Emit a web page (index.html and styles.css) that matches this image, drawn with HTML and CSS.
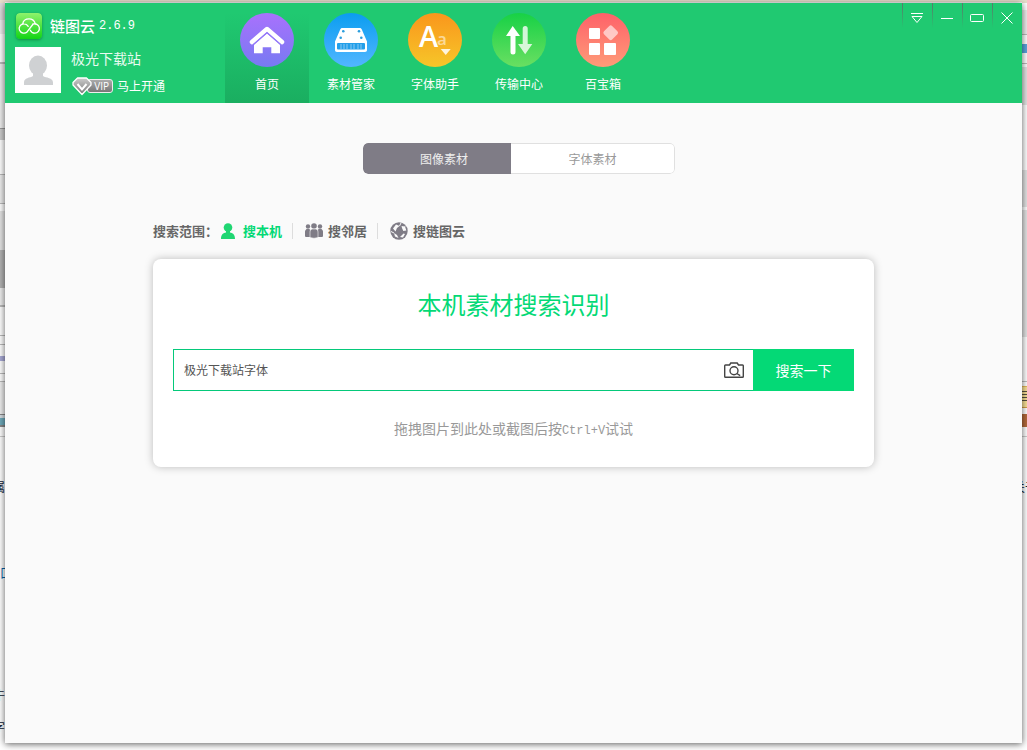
FILE: index.html
```html
<!DOCTYPE html>
<html lang="zh-CN">
<head>
<meta charset="utf-8">
<title>链图云</title>
<meta name="viewport" content="width=device-width, initial-scale=1">
<link rel="stylesheet" href="styles.css">
</head>
<body>
<div class="desktop" aria-hidden="true">
  <div class="strip strip-left">
    <span class="frag f1">属</span><span class="frag f2">口</span><span class="frag f3">牛</span><span class="frag f4">字</span>
  </div>
  <div class="strip strip-right"><span class="frag f5">关于</span></div>
</div>
<div class="window">
  <header class="header">
    <div class="brand">
      <div class="brand-title">
        <svg class="logo" viewBox="0 0 26 26" aria-hidden="true">
          <defs><linearGradient id="gl" x1="0" y1="0" x2="0" y2="1"><stop offset="0" stop-color="#8ef36c"/><stop offset="1" stop-color="#12d414"/></linearGradient></defs>
          <rect width="26" height="26" rx="4" fill="url(#gl)"/>
          <g fill="none" stroke="#fff" stroke-width="1.3" stroke-linecap="round">
            <path d="M16.800 11.500 11.300 18.700A4.700 4.700 0 1 1 8 10.800c2 0 3.300 1 4.200 2.600"/>
            <path d="M14.300 17.200c1 2 2.600 3 4.500 3a4.700 4.700 0 1 0-2-9"/>
            <path d="M6.700 10.800c.5-3 3-5 6.300-5 3 0 5.500 2 6.300 5"/>
          </g>
        </svg>
        <h1 class="app-name">链图云</h1><span class="version">2.6.9</span>
      </div>
      <div class="user">
        <svg class="avatar" viewBox="0 0 46 46" role="img" aria-label="头像"><rect width="46" height="46" fill="#fff"/><ellipse cx="23" cy="18.500" rx="9" ry="10" fill="#cfd1d3"/><path d="M18 26h10v3c3 2 10 1.500 10 6.500V38H9v-2.500c0-5 6-4.500 9-6.500z" fill="#cfd1d3"/></svg>
        <div class="user-info">
          <span class="user-name">极光下载站</span>
          <a class="vip" href="#">
            <span class="vip-badge">
              <svg class="vip-gem" viewBox="0 0 20 19" aria-hidden="true"><defs><linearGradient id="gg" x1="0" y1="0" x2="0" y2="1"><stop offset="0" stop-color="#ccc"/><stop offset="1" stop-color="#777"/></linearGradient></defs><path d="M5.500 1h9L19 5.500V8l-9 9.500L1 8V5.500z" fill="url(#gg)" stroke="#fff" stroke-width="1.300" stroke-linejoin="round"/><path d="m5.500 7 4.500 5.500L14.500 7" fill="none" stroke="#fff" stroke-width="2"/></svg>
              <span class="vip-text">VIP</span>
            </span>
            <span>马上开通</span>
          </a>
        </div>
      </div>
    </div>
    <nav class="nav">
      <button class="tab active" type="button">
        <svg class="tab-icon" viewBox="0 0 54 54" aria-hidden="true"><defs><linearGradient id="g1" x1="0" y1="0" x2="0" y2="1"><stop offset="0" stop-color="#a971fd"/><stop offset="1" stop-color="#777af2"/></linearGradient></defs><circle cx="27" cy="27" r="27" fill="url(#g1)"/><path d="M12 29 27 16l15 13" fill="none" stroke="#fff" stroke-width="4.500" stroke-linecap="round" stroke-linejoin="round"/><path d="M14 31.500 27 20.500l13 11v8.800h-8.700v-6h-8.600v6H14z" fill="#fff"/><path d="m13.500 31.500 13.500-12 13.500 12" fill="none" stroke="#9479f9" stroke-width="1.300"/></svg>
        <span>首页</span>
      </button>
      <button class="tab" type="button">
        <svg class="tab-icon" viewBox="0 0 54 54" aria-hidden="true"><defs><linearGradient id="g2" x1="0" y1="0" x2="0" y2="1"><stop offset="0" stop-color="#0b9df0"/><stop offset="1" stop-color="#52b6ff"/></linearGradient></defs><circle cx="27" cy="27" r="27" fill="url(#g2)"/><path d="M18.500 15h17c1.300 0 2 .5 2.300 1.600L43 28.500V37c0 1.300-.7 2-2 2H13c-1.300 0-2-.7-2-2v-8.500l5.200-11.900c.3-1.100 1-1.600 2.300-1.600z" fill="#fff"/><rect x="13" y="30" width="28" height="6.500" rx="1" fill="#239fe9"/><path d="M17 31v5m3-5v5m3-5v5m4-5v5m3-5v5m4-5v5m3-5v5" stroke="#8bcaf2" stroke-width="1"/><g fill="#2a9ddd"><circle cx="19.300" cy="18.300" r="1.300"/><circle cx="35" cy="18.300" r="1.300"/><circle cx="16.700" cy="24.700" r="1.300"/><circle cx="37.300" cy="24.700" r="1.300"/></g></svg>
        <span>素材管家</span>
      </button>
      <button class="tab" type="button">
        <svg class="tab-icon" viewBox="0 0 54 54" aria-hidden="true"><defs><linearGradient id="g3" x1="0" y1="0" x2="0" y2="1"><stop offset="0" stop-color="#fa961c"/><stop offset="1" stop-color="#f6c629"/></linearGradient></defs><circle cx="27" cy="27" r="27" fill="url(#g3)"/><text class="glyph-a" x="11" y="34" fill="#fff">A</text><text class="glyph-b" x="29" y="32" fill="#fff" fill-opacity=".55">a</text><path d="M32.700 36h10l-5 6z" fill="#fff" fill-opacity=".85"/></svg>
        <span>字体助手</span>
      </button>
      <button class="tab" type="button">
        <svg class="tab-icon" viewBox="0 0 54 54" aria-hidden="true"><defs><linearGradient id="g4" x1="0" y1="0" x2="0" y2="1"><stop offset="0" stop-color="#17d146"/><stop offset="1" stop-color="#69df62"/></linearGradient></defs><circle cx="27" cy="27" r="27" fill="url(#g4)"/><path d="m20.700 13 7.300 10h-4.500v16a2.500 2.500 0 0 1-5 0V23H14z" fill="#fff"/><path d="M33.200 41.300 26 31h4.700V15.500a2.500 2.500 0 0 1 5 0V31h4.600z" fill="#fff" fill-opacity=".78"/></svg>
        <span>传输中心</span>
      </button>
      <button class="tab" type="button">
        <svg class="tab-icon" viewBox="0 0 54 54" aria-hidden="true"><defs><linearGradient id="g5" x1="0" y1="0" x2="0" y2="1"><stop offset="0" stop-color="#fe6169"/><stop offset="1" stop-color="#fe9b78"/></linearGradient></defs><circle cx="27" cy="27" r="27" fill="url(#g5)"/><g fill="#fff"><rect x="13" y="15" width="11" height="11" rx="1"/><rect x="13" y="30" width="11" height="12" rx="1"/><rect x="28" y="30" width="12" height="12" rx="1"/><rect x="29" y="14" width="11.500" height="11.500" rx="2" fill-opacity=".6" transform="rotate(45 34.700 19.700)"/></g></svg>
        <span>百宝箱</span>
      </button>
    </nav>
    <div class="controls">
      <button class="control" type="button" aria-label="菜单"><svg viewBox="0 0 14 12"><path d="M1 1.500h12M2 4.500h10L7 10.500z"/></svg></button>
      <button class="control" type="button" aria-label="最小化"><svg viewBox="0 0 14 12"><path d="M1 6.500h12"/></svg></button>
      <button class="control" type="button" aria-label="最大化"><svg viewBox="0 0 14 12"><rect x=".5" y="2.500" width="13" height="7" rx="1"/></svg></button>
      <button class="control" type="button" aria-label="关闭"><svg viewBox="0 0 14 12"><path d="m1.500.5 11 11m0-11-11 11"/></svg></button>
    </div>
  </header>
  <main class="main">
    <div class="switch">
      <button class="switch-item selected" type="button">图像素材</button>
      <button class="switch-item" type="button">字体素材</button>
    </div>
    <section class="search">
      <div class="scope">
        <span class="scope-label">搜索范围：</span>
        <button class="scope-item current" type="button">
          <svg class="i-person" viewBox="0 0 14 16" aria-hidden="true"><circle cx="7" cy="4.500" r="4.300"/><path d="M5 8h4v1.500c2.500.5 5 1.500 5 6.500H0c0-5 2.500-6 5-6.500z"/></svg>搜本机</button>
        <button class="scope-item" type="button">
          <svg class="i-group" viewBox="0 0 18 16" aria-hidden="true"><circle cx="3" cy="3.500" r="2.200"/><circle cx="15" cy="3.500" r="2.200"/><path d="M1.500 6h3l.5 1v7H1q-1 0-1-1V8.500Q0 7 1.500 6zM13.500 6h3Q18 7 18 8.500V13q0 1-1 1h-4V7z"/><circle cx="9" cy="3" r="2.800"/><path d="M7 6h4c1.500.5 2 1.500 2 3v5.500q-4 1.500-8 0V9c0-1.500.5-2.500 2-3z" stroke="#fafafa" stroke-width=".6"/></svg>搜邻居</button>
        <button class="scope-item" type="button">
          <svg class="i-globe" viewBox="0 0 18 18" aria-hidden="true"><circle cx="9" cy="9" r="8.700"/><path d="M6 2.500 9.500 4 7 6 5.500 9.500 3 6.500zM11.500 4 15 4.500l1.300 4-3 .5-1.300-3zM4 11l3 2 1.500 3-3.500-1.500zM13.500 11.500l1.500.5-2 3.500-3-.5z" fill="#fafafa"/><path d="M1 9.500 4 11M9.500 4l1.500-3M15 4.500l1-1" fill="none" stroke="#fafafa"/></svg>搜链图云</button>
      </div>
      <form class="card">
        <h2 class="card-title">本机素材搜索识别</h2>
        <div class="search-row">
          <input class="search-input" type="text" aria-label="搜索素材" value="极光下载站字体">
          <button class="camera" type="button" aria-label="以图搜索"><svg viewBox="0 0 20 16"><path d="M1.500 3h4l1.300-2h6.400l1.300 2h4q.8 0 .8.800v10.700q0 .8-.8.800h-17q-.8 0-.8-.8V3.800q0-.8.800-.8z"/><circle cx="10" cy="8.700" r="4"/><path d="m12.800 11.500 3.400 2.200"/></svg></button>
          <button class="submit" type="submit">搜索一下</button>
        </div>
        <p class="hint">拖拽图片到此处或截图后按<span class="keys">Ctrl+V</span>试试</p>
      </form>
    </section>
  </main>
</div>
</body>
</html>
```
FILE: styles.css
```css
* { box-sizing: border-box; }

body {
  margin: 0;
  min-height: 100vh;
  display: flex;
  padding: 3px 5px 7px;
  background: #fff;
  font: 12px/16px "Noto Sans CJK SC", sans-serif;
  color: #555;
}

button, input { font: inherit; color: inherit; border: 0; margin: 0; padding: 0; background: none; }
button { cursor: pointer; }
svg { display: block; flex: none; }
h1, h2, p { margin: 0; font-weight: normal; }

/* Slivers of the desktop showing around the window */
.desktop { position: absolute; inset: 0; overflow: hidden; background: linear-gradient(#e9e0cd 2px, #fff 2px); }
.strip { position: absolute; top: 0; bottom: 0; width: 5px; overflow: hidden; }
.strip-left {
  left: 0;
  background: linear-gradient(#e9e0cd 3px, #ddd 3px 20px, #eee 20px 34px, #fff 34px 62px, #bbb 62px 64px, #eee 64px 128px, #999 128px 129px, #ccc 129px 140px, #fff 140px 174px, #bbb 174px 175px, #eee 175px 203px, #bbb 203px 204px, #fff 204px 211px, #e4e4e4 211px 250px, #b3b3b3 250px 288px, #eee 288px 305px, #bbb 305px 307px, #fff 307px 335px, #bbb 335px 336px, #fff 336px 344px, #bbb 344px 345px, #fff 345px 356px, #a9aad6 356px 361px, #fff 361px 373px, #bbb 373px 374px, #fff 374px 381px, #bbb 381px 382px, #eee 382px 414px, #888 414px 415px, #d5dde2 415px 418px, #6faabb 418px 425px, #888 425px 427px, #fff 427px 436px, #ccc 436px 437px, #fff 437px);
}
.strip-right {
  right: 0;
  background: linear-gradient(#e9e0cd 3px, #fff 3px 10px, #eee 10px 34px, #bbb 34px 35px, #fff 35px 44px, #5aa4dd 44px 53px, #fff 53px 63px, #bbb 63px 64px, #fff 64px 67px, #e4e4e4 67px 105px, #fff 105px 170px, #e4e4e4 170px 207px, #fff 207px 210px, #e4e4e4 210px 337px, #fff 337px 381px, #bbb 381px 382px, #fff 382px 386px, #e6b95b 386px 387px, #fae096 387px 391px, #55503f 391px 392px, #fae096 392px 394px, #55503f 394px 395px, #fae096 395px 397px, #55503f 397px 398px, #fae096 398px 400px, #55503f 400px 401px, #fae096 401px 407px, #d39c46 407px 408px, #fff 408px 414px, #b56a3b 414px 427px, #fff 427px 436px, #ccc 436px 437px, #fff 437px);
}
.frag { position: absolute; left: -7px; color: #123; white-space: nowrap; }
.f1 { top: 479px; }
.f2 { top: 565px; left: 0; color: #0763a8; }
.f3 { top: 687px; }
.f4 { top: 719px; }
.f5 { top: 479px; left: -9px; }

.window {
  position: relative;
  flex: 1;
  min-width: 0;
  display: flex;
  flex-direction: column;
  background: #fafafa;
  box-shadow: 0 1px 7px rgba(0, 0, 0, .65);
}

.header { display: flex; height: 100px; background: #20c971; color: #fff; }
.brand { width: 220px; padding: 10px 0 0 10px; flex: none; }
.brand-title { display: flex; align-items: center; height: 26px; padding-left: 1px; }
.logo { width: 26px; height: 26px; border-radius: 4px; box-shadow: 0 1px 3px rgba(0, 80, 20, .5); }
.app-name { margin-left: 8px; font-size: 15px; font-weight: 500; }
.version { margin-left: 4px; font: 12px/16px "Liberation Mono", monospace; }
.user { display: flex; gap: 10px; margin-top: 8px; }
.avatar { width: 46px; height: 46px; }
.user-info { display: flex; flex-direction: column; gap: 10px; padding-top: 3px; }
.user-name { font-size: 14px; line-height: 16px; color: #eafbf1; }
.vip { display: flex; align-items: center; gap: 4px; height: 20px; color: #fff; text-decoration: none; }
.vip-badge { display: flex; align-items: center; padding-left: 1px; }
.vip-gem { position: relative; width: 20px; height: 19px; }
.vip-text {
  margin-left: -5px;
  width: 26px;
  height: 14px;
  border: 1px solid #eee;
  border-radius: 3px;
  background: linear-gradient(#aaa, #777);
  font: 10px/12px "Open Sans", sans-serif;
  text-align: right;
  padding-right: 3px;
}

.nav { display: flex; flex: none; }
.tab { width: 84px; display: flex; flex-direction: column; align-items: center; gap: 9px; padding-top: 10px; }
.tab.active { background: linear-gradient(rgba(26, 174, 96, 0) 10px, #1aae60); }
.tab-icon { width: 54px; height: 54px; }
.glyph-a { font: 600 29px "Open Sans", sans-serif; }
.glyph-b { font: 600 17px "Open Sans", sans-serif; }

.controls { display: flex; margin-left: auto; height: 25px; }
.control {
  width: 30px;
  display: flex;
  align-items: center;
  justify-content: center;
  padding-top: 4px;
  background: linear-gradient(#5d7668, rgba(93, 118, 104, 0)) left / 1px 100% no-repeat;
}
.control svg { width: 14px; height: 12px; fill: none; stroke: #fff; stroke-width: 1; }

.main { display: flex; flex-direction: column; align-items: center; padding: 40px 20px; }
.switch { display: flex; height: 31px; margin-left: 11px; border-radius: 5px; background: #fff; overflow: hidden; }
.switch-item { width: 164px; border: 1px solid #e0e0e0; border-left: 0; border-radius: 0 5px 5px 0; color: #999; }
.switch-item.selected { width: 148px; padding-left: 14px; border: 0; border-radius: 5px 0 0 5px; background: #7f7c86; color: #eee; }

.search { width: 100%; max-width: 721px; margin-top: 48px; }
.scope { display: flex; align-items: center; height: 18px; font-size: 13px; font-weight: 700; color: #666; }
.scope-label { width: 68px; white-space: nowrap; }
.scope-item { display: flex; align-items: center; gap: 5px; height: 16px; font-weight: 700; fill: #7f7c86; }
.scope-item + .scope-item { margin-left: 10px; padding-left: 12px; border-left: 1px solid #ddd; }
.scope-item.current { color: #04d976; fill: #20d672; gap: 8px; }
.i-person { width: 14px; height: 16px; }
.i-group { width: 18px; height: 16px; }
.i-globe { width: 18px; height: 18px; }

.card {
  margin-top: 19px;
  padding: 29px 20px 28px;
  border-radius: 8px;
  background: #fff;
  box-shadow: 0 0 8px rgba(0, 0, 0, .25);
  text-align: center;
}
.card-title { font-size: 24px; line-height: 32px; color: #04d976; }
.search-row { display: flex; height: 42px; margin-top: 29px; border: 1px solid #04c97a; }
.search-input { flex: 1; min-width: 0; padding-left: 10px; outline: 0; color: #555; }
.camera { width: 40px; display: flex; align-items: center; justify-content: center; }
.camera svg { width: 20px; height: 16px; fill: none; stroke: #444; stroke-width: 1.4px; }
.submit { width: 101px; margin: -1px; background: #04d976; color: #fff; font-size: 14px; }
.hint { margin-top: 27px; font-size: 14px; line-height: 20px; color: #999; }
.keys { font: 12px/16px "Liberation Mono", monospace; }
```
